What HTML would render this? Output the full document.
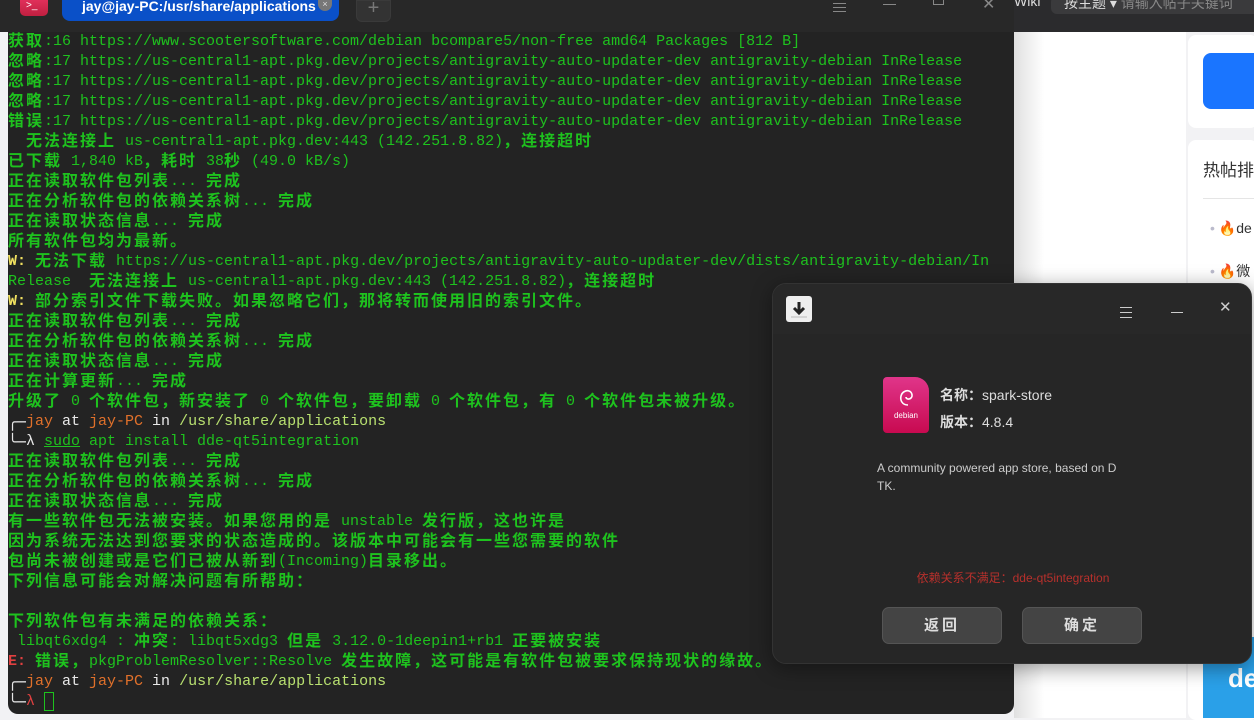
<!DOCTYPE html>
<html><head><meta charset="utf-8"><style>
*{margin:0;padding:0;box-sizing:border-box}
body{width:1254px;height:718px;overflow:hidden;background:#f2f2f4;position:relative;font-family:"Liberation Sans","Noto Sans CJK SC",sans-serif}
.abs{position:absolute}
#term{left:8px;top:0;width:1006px;height:714px;background:#232323;border-radius:0 0 10px 10px;overflow:hidden}
#tbar{left:0;top:0;width:1014px;height:32px;background:#282828}
pre{position:absolute;left:8px;top:32px;font-family:"Liberation Mono","Noto Sans CJK SC",monospace;font-size:15px;line-height:20px;color:#1ec21e;white-space:pre}
pre .ln{height:20px;line-height:20px;overflow:visible;white-space:pre}
pre .c{display:inline-block;width:18px;height:20px;line-height:20px;vertical-align:top;text-align:left;font-size:16px;font-weight:bold}
pre .b{display:inline-block;width:9px;overflow:hidden;vertical-align:top;color:#e8e8e8;font-family:"DejaVu Sans Mono",monospace}
.y{color:#f0e060;font-weight:bold}.r{color:#e04040;font-weight:bold}.o{color:#e0702a}.w{color:#e8e8e8}.p{color:#b8e070}
</style></head><body>
<div class="abs" style="left:0;top:0;width:8px;height:32px;background:#2a2a2a"></div>
<div class="abs" id="term"></div>
<div class="abs" id="tbar">
<div class="abs" style="left:20px;top:0;width:28px;height:16px;background:linear-gradient(#e0305a,#c02040);border-radius:0 0 5px 5px;color:#fff;font-size:10px;padding-left:6px">&gt;_</div>
<div class="abs" style="left:62px;top:0;width:277px;height:21px;background:#0a50c8;border-radius:0 0 8px 8px;color:#fff;font-size:14px;font-weight:bold;padding-left:20px;line-height:13px;white-space:nowrap;overflow:hidden">jay@jay-PC:/usr/share/applications</div>
<div class="abs" style="left:318px;top:0;width:14px;height:11px;background:#777;border-radius:0 0 7px 7px;color:#ddd;font-size:9px;text-align:center;line-height:8px">×</div>
<div class="abs" style="left:356px;top:0;width:35px;height:22px;background:#333;border:1px solid #3a3a3a;border-radius:0 0 6px 6px;color:#777;text-align:center;font-size:20px;line-height:14px">+</div>
<div class="abs" style="left:833px;top:3px;width:13px;height:1px;background:#888;box-shadow:0 4px 0 #888,0 8px 0 #888"></div>
<div class="abs" style="left:883px;top:4px;width:13px;height:1px;background:#888"></div>
<div class="abs" style="left:933px;top:-4px;width:11px;height:9px;border:1px solid #888"></div>
<div class="abs" style="left:982px;top:-6px;color:#888;font-size:16px">✕</div>
</div>
<pre id="t">获取:16 https://www.scootersoftware.com/debian bcompare5/non-free amd64 Packages [812 B]
忽略:17 https://us-central1-apt.pkg.dev/projects/antigravity-auto-updater-dev antigravity-debian InRelease
忽略:17 https://us-central1-apt.pkg.dev/projects/antigravity-auto-updater-dev antigravity-debian InRelease
忽略:17 https://us-central1-apt.pkg.dev/projects/antigravity-auto-updater-dev antigravity-debian InRelease
错误:17 https://us-central1-apt.pkg.dev/projects/antigravity-auto-updater-dev antigravity-debian InRelease
  无法连接上 us-central1-apt.pkg.dev:443 (142.251.8.82)，连接超时
已下载 1,840 kB，耗时 38秒 (49.0 kB/s)
正在读取软件包列表... 完成
正在分析软件包的依赖关系树... 完成
正在读取状态信息... 完成
所有软件包均为最新。
<span class="y">W:</span> 无法下载 https://us-central1-apt.pkg.dev/projects/antigravity-auto-updater-dev/dists/antigravity-debian/In
Release  无法连接上 us-central1-apt.pkg.dev:443 (142.251.8.82)，连接超时
<span class="y">W:</span> 部分索引文件下载失败。如果忽略它们，那将转而使用旧的索引文件。
正在读取软件包列表... 完成
正在分析软件包的依赖关系树... 完成
正在读取状态信息... 完成
正在计算更新... 完成
升级了 0 个软件包，新安装了 0 个软件包，要卸载 0 个软件包，有 0 个软件包未被升级。
<span class="b">╭</span><span class="b">─</span><span class="o">jay</span><span class="w"> at </span><span class="o">jay-PC</span><span class="w"> in </span><span class="p">/usr/share/applications</span>
<span class="b">╰</span><span class="b">─</span><span class="w">λ </span><u>sudo</u> apt install dde-qt5integration
正在读取软件包列表... 完成
正在分析软件包的依赖关系树... 完成
正在读取状态信息... 完成
有一些软件包无法被安装。如果您用的是 unstable 发行版，这也许是
因为系统无法达到您要求的状态造成的。该版本中可能会有一些您需要的软件
包尚未被创建或是它们已被从新到(Incoming)目录移出。
下列信息可能会对解决问题有所帮助：

下列软件包有未满足的依赖关系：
 libqt6xdg4 : 冲突: libqt5xdg3 但是 3.12.0-1deepin1+rb1 正要被安装
<span class="r">E:</span> 错误，pkgProblemResolver::Resolve 发生故障，这可能是有软件包被要求保持现状的缘故。
<span class="b">╭</span><span class="b">─</span><span class="o">jay</span><span class="w"> at </span><span class="o">jay-PC</span><span class="w"> in </span><span class="p">/usr/share/applications</span>
<span class="b">╰</span><span class="b">─</span><span class="r" style="font-weight:normal">λ</span> <span style="display:inline-block;width:10px;height:19px;border:1px solid #1ec21e;vertical-align:top"></span></pre>
<!-- browser -->
<div class="abs" style="left:1014px;top:0;width:240px;height:32px;background:#2b2b2d"></div>
<div class="abs" style="left:1014px;top:-7px;color:#ddd;font-size:14px">Wiki</div>
<div class="abs" style="left:1051px;top:-4px;width:210px;height:18px;background:#3a3a3c;border-radius:6px;color:#ddd;font-size:14px;padding-left:13px;line-height:14px;white-space:nowrap">按主题 ▾ <span style="color:#888">请输入帖子关键词</span></div>
<div class="abs" style="left:1014px;top:32px;width:30px;height:686px;background:linear-gradient(90deg,#e0e0e0,#fff)"></div>
<div class="abs" style="left:1044px;top:32px;width:142px;height:686px;background:#fff"></div>
<div class="abs" style="left:1188px;top:35px;width:70px;height:93px;background:#fff;border-radius:8px"></div>
<div class="abs" style="left:1203px;top:53px;width:60px;height:56px;background:#1a75ff;border-radius:8px"></div>
<div class="abs" style="left:1188px;top:140px;width:70px;height:580px;background:#fff;border-radius:8px"></div>
<div class="abs" style="left:1203px;top:156px;font-size:17px;color:#333;white-space:nowrap">热帖排行</div>
<div class="abs" style="left:1203px;top:198px;width:60px;height:1px;background:#e5e5e5"></div>
<div class="abs" style="left:1210px;top:220px;font-size:14px;color:#333;white-space:nowrap"><span style="color:#bbc">•</span> <span style="color:#f04010">🔥</span>de</div>
<div class="abs" style="left:1210px;top:261px;font-size:14px;color:#333;white-space:nowrap"><span style="color:#bbc">•</span> <span style="color:#f04010">🔥</span>微</div>
<div class="abs" style="left:1203px;top:637px;width:60px;height:81px;background:#2aa0e8;color:#fff;font-weight:bold;font-size:26px;padding:26px 0 0 25px">de</div>
<!-- dialog -->
<div class="abs" style="left:772px;top:283px;width:480px;height:381px;background:#262626;border-radius:14px;border:1px solid #333;box-shadow:0 4px 20px rgba(0,0,0,.4);overflow:hidden">
<div class="abs" style="left:0;top:0;width:480px;height:50px;background:#282828"></div>
<div class="abs" style="left:13px;top:12px;width:26px;height:26px;background:#eee;border-radius:3px"><svg width="26" height="26"><path d="M13 6v10M8 12l5 5 5-5" stroke="#222" stroke-width="3" fill="none"/><path d="M5 21h16" stroke="#bbb"/></svg></div>
<div class="abs" style="left:347px;top:23px;width:12px;height:1px;background:#ccc;box-shadow:0 5px 0 #ccc,0 10px 0 #ccc"></div>
<div class="abs" style="left:398px;top:28px;width:12px;height:1px;background:#ccc"></div>
<div class="abs" style="left:446px;top:14px;color:#ccc;font-size:15px">✕</div>
<div class="abs" style="left:110px;top:93px;width:46px;height:56px;background:linear-gradient(#e0358a,#c80a50);border-radius:4px 14px 4px 4px;color:#fff;font-size:8px;text-align:center;padding-top:10px"><svg width="20" height="22" viewBox="0 0 20 22"><path d="M12 18C6 18 4 13 5 9 6 5 10 3 13 4 16 5 17 9 15 11 13 13 10 12 10 10" stroke="#fff" stroke-width="1.6" fill="none"/></svg><div>debian</div></div>
<div class="abs" style="left:167px;top:101px;color:#ddd;font-size:14px;font-weight:bold">名称：<span style="font-weight:normal">spark-store</span></div>
<div class="abs" style="left:167px;top:128px;color:#ddd;font-size:14px;font-weight:bold">版本：<span style="font-weight:normal">4.8.4</span></div>
<div class="abs" style="left:104px;top:175px;width:270px;color:#ccc;font-size:12px;line-height:18px">A community powered app store, based on D<br>TK.</div>
<div class="abs" style="left:0;top:285px;width:480px;text-align:center;color:#b8302c;font-size:12px">依赖关系不满足：dde-qt5integration</div>
<div class="abs" style="left:109px;top:323px;width:120px;height:37px;background:#444;border:1px solid #555;border-radius:7px;color:#ddd;font-size:15px;font-weight:bold;text-align:center;line-height:35px;letter-spacing:3px">返回</div>
<div class="abs" style="left:249px;top:323px;width:120px;height:37px;background:#444;border:1px solid #555;border-radius:7px;color:#ddd;font-size:15px;font-weight:bold;text-align:center;line-height:35px;letter-spacing:3px">确定</div>
</div>
<script>
(function(){var t=document.getElementById('t');
t.innerHTML=t.innerHTML.split('\n').map(function(l){return '<div class="ln">'+(l||' ')+'</div>';}).join('');
function walk(n){if(n.nodeType==3){var s=n.nodeValue;if(!/[\u3000-\u9fff\uff00-\uffef]/.test(s))return;
var f=document.createDocumentFragment();s.split(/([\u3000-\u9fff\uff00-\uffef])/).forEach(function(p){if(!p)return;
if(/^[\u3000-\u9fff\uff00-\uffef]$/.test(p)){var b=document.createElement('span');b.className='c';b.textContent=p;f.appendChild(b);}else f.appendChild(document.createTextNode(p));});
n.parentNode.replaceChild(f,n);}else{Array.prototype.slice.call(n.childNodes).forEach(walk);}}
walk(t);})();
</script>
</body></html>
